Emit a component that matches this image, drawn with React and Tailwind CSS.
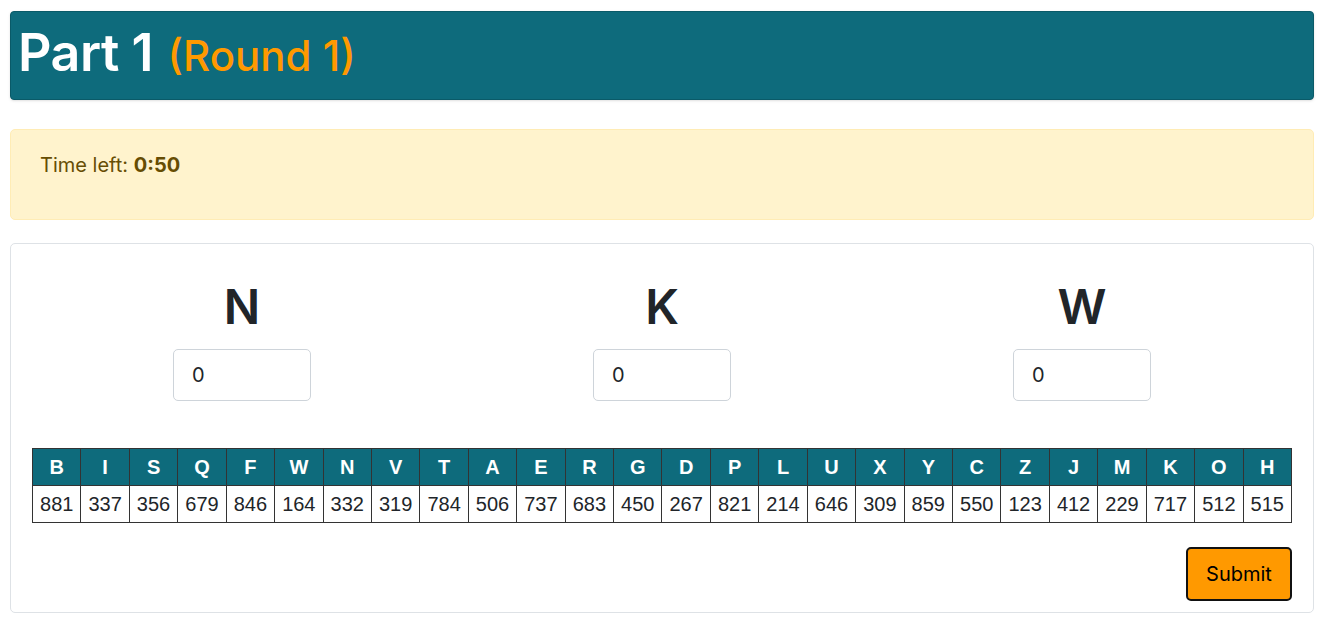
export default function App() {
  const cols = [
    ["B", 881], ["I", 337], ["S", 356], ["Q", 679], ["F", 846], ["W", 164], ["N", 332],
    ["V", 319], ["T", 784], ["A", 506], ["E", 737], ["R", 683], ["G", 450], ["D", 267],
    ["P", 821], ["L", 214], ["U", 646], ["X", 309], ["Y", 859], ["C", 550], ["Z", 123],
    ["J", 412], ["M", 229], ["K", 717], ["O", 512], ["H", 515],
  ];
  const fields = ["N", "K", "W"];

  return (
    <div className="min-h-screen bg-white px-[10px] pt-[11px] font-['Inter','Liberation_Sans',sans-serif] text-[#212529]">
      <div className="flex h-[89px] items-center rounded-[4px] border border-[#0a5a68] bg-[#0e6b7c] px-[7px] pb-[6px] shadow-sm">
        <h1 className="text-[52px] font-semibold leading-none tracking-[-0.5px] text-white">
          Part 1 <span className="ml-[2px] text-[42px] font-medium tracking-normal text-[#ff9900]">(Round 1)</span>
        </h1>
      </div>

      <div className="mt-[29px] h-[91px] rounded-[5px] border border-[#ffecb5] bg-[#fff3cd] px-[29px] pt-[20px] text-[20px] text-[#664d03]">
        Time left: <b className="font-bold">0:50</b>
      </div>

      <div className="mt-[23px] rounded-[5px] border border-[#dee2e6] px-[21px] pb-[11px] pt-[34px]">
        <div className="grid grid-cols-3">
          {fields.map((f) => (
            <div key={f} className="flex flex-col items-center">
              <div className="text-[48px] font-semibold leading-[58px]">{f}</div>
              <input
                defaultValue="0"
                className="mt-[13px] h-[52px] w-[138px] rounded-[5px] border border-[#ced4da] px-[18px] text-[20px] outline-none"
              />
            </div>
          ))}
        </div>

        <table className="mt-[47px] w-full border-collapse font-['Liberation_Sans',sans-serif] text-[20px]">
          <thead>
            <tr className="bg-[#0e6b7c] text-white">
              {cols.map(([l]) => (
                <th key={l} className="h-[37px] border border-[#333] px-[3px] text-center font-bold">{l}</th>
              ))}
            </tr>
          </thead>
          <tbody>
            <tr>
              {cols.map(([l, v]) => (
                <td key={l} className="h-[37px] border border-[#333] px-[3px] text-center">{v}</td>
              ))}
            </tr>
          </tbody>
        </table>

        <div className="mt-[24px] flex justify-end">
          <button className="h-[54px] w-[106px] rounded-[5px] border-2 border-[#111] bg-[#ff9900] text-[20px] text-black">
            Submit
          </button>
        </div>
      </div>
    </div>
  );
}
